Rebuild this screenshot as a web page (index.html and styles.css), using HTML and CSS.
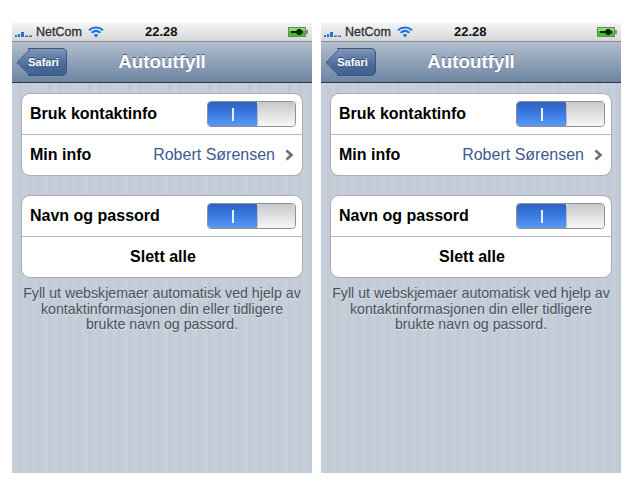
FILE: index.html
```html
<!DOCTYPE html>
<html lang="no">
<head>
<meta charset="utf-8">
<title>Autoutfyll</title>
<link rel="stylesheet" href="styles.css">
</head>
<body>
<div class="screens">
  <section class="phone">
    <div class="status">
      <div class="status-left">
        <svg class="signal" width="20" height="8" viewBox="0 0 20 8"><rect x="0" y="6" width="2" height="2" fill="#2a6fd0"/><rect x="3" y="5" width="2" height="3" fill="#2a6fd0"/><rect x="6" y="3" width="3" height="5" fill="#2a6fd0"/><rect x="10" y="6.5" width="3" height="1.5" fill="#3c6fb8"/><rect x="14" y="6.5" width="3" height="1.5" fill="#3c6fb8"/></svg>
        <span class="carrier">NetCom</span>
        <svg class="wifi" width="16" height="12" viewBox="0 0 16 12"><path d="M1 4.2C5 .6 11 .6 15 4.2" fill="none" stroke="#1a73d8" stroke-width="2"/><path d="M3.6 6.7C6.2 4.5 9.8 4.5 12.4 6.7" fill="none" stroke="#1a73d8" stroke-width="2"/><path d="M8 11.6 5.7 8.9C7 7.8 9 7.8 10.3 8.9Z" fill="#1a73d8"/></svg>
      </div>
      <span class="clock">22.28</span>
      <svg class="battery" width="20" height="10" viewBox="0 0 20 10"><rect x=".5" y=".5" width="17" height="9" fill="#35c81e" stroke="#77806f"/><rect x="18" y="3" width="2" height="4" fill="#8b9088"/><rect x="1" y="1" width="16" height="3" fill="#7be85c"/><path d="M3 4h5l2-2h3v1.500h2v3h-2V8h-3L8 6H3Z" fill="#0c1a0a"/></svg>
    </div>
    <header class="nav">
      <button class="back"><span>Safari</span></button>
      <h1>Autoutfyll</h1>
    </header>
    <main class="content">
      <div class="group">
        <div class="row"><span class="label">Bruk kontaktinfo</span><div class="toggle"><span class="on"><i></i></span><span class="knob"></span></div></div>
        <div class="row"><span class="label">Min info</span><span class="value">Robert Sørensen</span><svg class="chev" width="9" height="12" viewBox="0 0 9 12"><path d="M1.500 1.500 6.500 6l-5 4.500" fill="none" stroke="#6d6d6d" stroke-width="2.600"/></svg></div>
      </div>
      <div class="group">
        <div class="row"><span class="label">Navn og passord</span><div class="toggle"><span class="on"><i></i></span><span class="knob"></span></div></div>
        <div class="row center"><span class="label">Slett alle</span></div>
      </div>
      <p class="note">Fyll ut webskjemaer automatisk ved hjelp av kontaktinformasjonen din eller tidligere brukte navn og passord.</p>
    </main>
  </section>
  <section class="phone">
    <div class="status">
      <div class="status-left">
        <svg class="signal" width="20" height="8" viewBox="0 0 20 8"><rect x="0" y="6" width="2" height="2" fill="#2a6fd0"/><rect x="3" y="5" width="2" height="3" fill="#2a6fd0"/><rect x="6" y="3" width="3" height="5" fill="#2a6fd0"/><rect x="10" y="6.5" width="3" height="1.5" fill="#3c6fb8"/><rect x="14" y="6.5" width="3" height="1.5" fill="#3c6fb8"/></svg>
        <span class="carrier">NetCom</span>
        <svg class="wifi" width="16" height="12" viewBox="0 0 16 12"><path d="M1 4.2C5 .6 11 .6 15 4.2" fill="none" stroke="#1a73d8" stroke-width="2"/><path d="M3.6 6.7C6.2 4.5 9.8 4.5 12.4 6.7" fill="none" stroke="#1a73d8" stroke-width="2"/><path d="M8 11.6 5.7 8.9C7 7.8 9 7.8 10.3 8.9Z" fill="#1a73d8"/></svg>
      </div>
      <span class="clock">22.28</span>
      <svg class="battery" width="20" height="10" viewBox="0 0 20 10"><rect x=".5" y=".5" width="17" height="9" fill="#35c81e" stroke="#77806f"/><rect x="18" y="3" width="2" height="4" fill="#8b9088"/><rect x="1" y="1" width="16" height="3" fill="#7be85c"/><path d="M3 4h5l2-2h3v1.500h2v3h-2V8h-3L8 6H3Z" fill="#0c1a0a"/></svg>
    </div>
    <header class="nav">
      <button class="back"><span>Safari</span></button>
      <h1>Autoutfyll</h1>
    </header>
    <main class="content">
      <div class="group">
        <div class="row"><span class="label">Bruk kontaktinfo</span><div class="toggle"><span class="on"><i></i></span><span class="knob"></span></div></div>
        <div class="row"><span class="label">Min info</span><span class="value">Robert Sørensen</span><svg class="chev" width="9" height="12" viewBox="0 0 9 12"><path d="M1.500 1.500 6.500 6l-5 4.500" fill="none" stroke="#6d6d6d" stroke-width="2.600"/></svg></div>
      </div>
      <div class="group">
        <div class="row"><span class="label">Navn og passord</span><div class="toggle"><span class="on"><i></i></span><span class="knob"></span></div></div>
        <div class="row center"><span class="label">Slett alle</span></div>
      </div>
      <p class="note">Fyll ut webskjemaer automatisk ved hjelp av kontaktinformasjonen din eller tidligere brukte navn og passord.</p>
    </main>
  </section>
</div>
</body>
</html>
```
FILE: styles.css
```css
* { box-sizing: border-box; }
html, body { margin: 0; background: #fff; }
body { font-family: "Liberation Sans", Arial, sans-serif; width: 630px; height: 500px; overflow: hidden; }
.screens { display: flex; gap: 9px; padding: 23px 0 0 12px; }
.phone { width: 300px; height: 450px; display: flex; flex-direction: column; }
.status {
  height: 19px; display: flex; align-items: center; justify-content: space-between; position: relative;
  padding: 0 4px 0 3px;
  background: linear-gradient(#f3f5f5, #d6d8d8);
  border-bottom: 1px solid #8c8f92;
}
.status-left { display: flex; align-items: center; }
.signal { margin-top: 1px; }
.carrier { font-size: 12.500px; color: #2c2f33; margin-left: 1px; -webkit-text-stroke: .3px #2c2f33; }
.wifi { margin-left: 6px; }
.clock { position: absolute; left: 133px; top: 2px; font-size: 13px; font-weight: 700; color: #111; line-height: 14px; }
.nav {
  height: 41px; position: relative; display: flex; align-items: center; justify-content: center;
  background: linear-gradient(#b2bfce, #6d84a2);
  border-bottom: 1px solid #2d3642;
}
.nav h1 { margin: 0; font-size: 18.800px; font-weight: 700; color: #fff; text-shadow: 0 -1px 0 #4a5a70; }
.back {
  position: absolute; left: 16px; top: 6px; width: 39px; height: 28px; padding: 0 0 0 1px;
  background: linear-gradient(#7f97b8, #4a6b9a 55%, #3f6191);
  border: 1px solid #3e5578; border-left: 0; border-radius: 0 5px 5px 0;
  font: 700 11px "Liberation Sans", Arial, sans-serif; color: #fff; text-shadow: 0 -1px 0 #33486a;
}
.back::before {
  content: ""; position: absolute; left: -8px; top: 4px; width: 18px; height: 18px; transform: rotate(45deg);
  background: linear-gradient(135deg, #7f97b8, #45679a 70%);
  border-left: 1px solid #3e5578; border-bottom: 1px solid #3e5578; border-radius: 0 0 0 3px;
}
.back span { position: relative; left: -4px; }
.content {
  flex: 1; padding: 10px 9px 0;
  background: repeating-linear-gradient(90deg, #c6cfd9 0 6px, #bfc8d3 6px 7px, #c2cbd6 7px 10px);
}
.group { background: #fff; border: 1px solid #a9adb3; border-radius: 9px; margin-bottom: 19px; height: 83px; }
.row { height: 41px; display: flex; align-items: center; padding: 0 6px 0 8px; border-bottom: 1px solid #b4b7bb; }
.row:last-child { border-bottom: 0; height: 40px; }
.row.center { justify-content: center; }
.label { font-size: 16px; font-weight: 700; color: #000; }
.value { margin-left: auto; font-size: 16px; color: #3e5a8e; margin-right: 1px; }
.chev { margin-left: 9px; margin-right: 2px; }
.toggle { margin-left: auto; width: 89px; height: 26px; display: flex; border: 1px solid #8d9096; border-radius: 4px; overflow: hidden; }
.on { flex: 1; display: flex; align-items: center; justify-content: center; background: linear-gradient(#2e62c0, #3a7ae2 48%, #5a9af2); }
.on i { display: block; width: 2px; height: 13px; background: #e6effc; }
.knob { width: 38px; background: linear-gradient(#c8c8c8, #f8f8f8); border-left: 1px solid #b9bcc0; border-radius: 3px; }
.note { margin: -11px 0 0; text-align: center; font-size: 14.200px; line-height: 15.500px; color: #47505e; text-shadow: 0 1px 0 #dde2e8; }
```
